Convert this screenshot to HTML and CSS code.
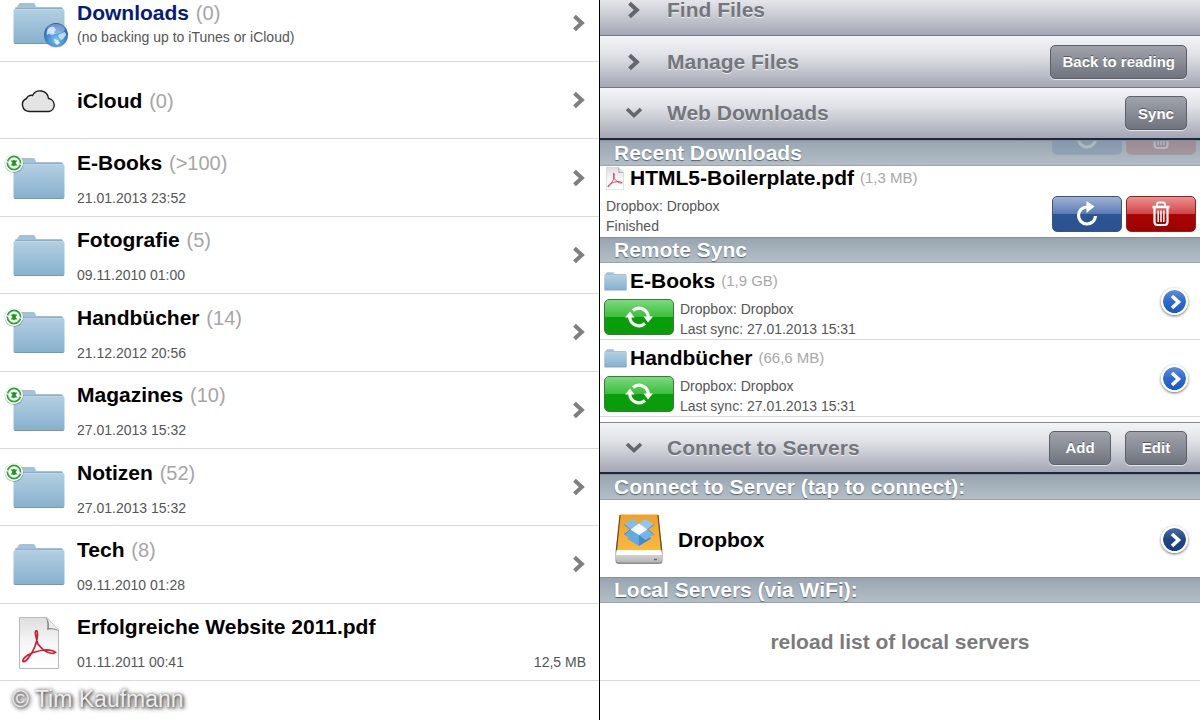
FILE: index.html
```html
<!DOCTYPE html>
<html lang="en">
<head>
    <meta charset="UTF-8">
    <meta name="viewport" content="width=device-width, initial-scale=1.0">
    <title>Files</title>
    <link rel="stylesheet" href="styles.css">
</head>
<body>

<!-- shared icons -->
<svg class="sprite" aria-hidden="true">
    <defs>
        <linearGradient id="folderFront" x1="0" y1="0" x2="0" y2="1">
            <stop offset="0" stop-color="#b3cfe2"/>
            <stop offset="1" stop-color="#86b0cd"/>
        </linearGradient>
        <linearGradient id="paper" x1="0" y1="0" x2="0" y2="1">
            <stop offset="0" stop-color="#dedede"/>
            <stop offset="0.5" stop-color="#f6f6f6"/>
            <stop offset="1" stop-color="#ffffff"/>
        </linearGradient>
        <radialGradient id="globeFill" cx="0.5" cy="0.7" r="0.65">
            <stop offset="0" stop-color="#7cc4f4"/>
            <stop offset="0.6" stop-color="#3f87cf"/>
            <stop offset="1" stop-color="#2a5ea8"/>
        </radialGradient>
        <linearGradient id="driveTop" x1="0" y1="0" x2="0" y2="1">
            <stop offset="0" stop-color="#f0a02a"/>
            <stop offset="1" stop-color="#fcb83e"/>
        </linearGradient>
        <linearGradient id="driveFront" x1="0" y1="0" x2="0" y2="1">
            <stop offset="0" stop-color="#e6e6e6"/>
            <stop offset="1" stop-color="#b5b5b5"/>
        </linearGradient>
    </defs>
    <symbol id="folder" viewBox="0 0 52 42">
        <path d="M2 9V5Q2 4 4 4L5 2Q6 0 8 0H20Q22 0 22.500 2L23 4H48Q50 4 50 6V12H2Z" fill="#a3c2d7"/>
        <path d="M2 6.500L3 5H49L50 6.500Z" fill="#8cb0c8"/>
        <rect x="0.500" y="6" width="51" height="35" rx="2" fill="url(#folderFront)"/>
        <path d="M1.500 6.500H50.500" stroke="#bdd5e5" stroke-width="1"/>
        <path d="M1.500 40.500H50.500" stroke="#6f9aba" stroke-width="1"/>
    </symbol>
    <symbol id="globe" viewBox="0 0 26 26">
        <circle cx="13" cy="13.800" r="12" fill="#00000030"/>
        <circle cx="13" cy="13" r="12" fill="url(#globeFill)"/>
        <path d="M5 7Q8 4 11 5L13 8L11 10L12 12L9 13L6 12L4 13L3.500 10Z" fill="#d9edfb" opacity="0.800"/>
        <path d="M15 13L19 11L22 10L23 13L20 17L18 18L16 16Z" fill="#d9edfb" opacity="0.800"/>
        <path d="M11 17L15 18L17 21L14 23L12 21Z" fill="#e8f6ff" opacity="0.900"/>
        <ellipse cx="13" cy="7" rx="9" ry="5" fill="#ffffff55"/>
    </symbol>
    <symbol id="cloud" viewBox="0 0 36 24">
        <path d="M8 22.500A6.800 6.800 0 0 1 5.500 9.500A5 5 0 0 1 11.500 6.500A8.500 8.500 0 0 1 27.500 9.500A6.600 6.600 0 0 1 28 22.500Z" fill="#e4e4e4" stroke="#1c1c1c" stroke-width="1.400"/>
    </symbol>
    <symbol id="syncbadge" viewBox="0 0 20 20">
        <circle cx="10" cy="10.500" r="9.500" fill="#00000040"/>
        <circle cx="10" cy="10" r="9" fill="#fff"/>
        <circle cx="10" cy="10" r="6.600" fill="none" stroke="#27a52a" stroke-width="1.700"/>
        <path d="M6.500 7.500H9L10 6.500L11 7.500H13.500L11.500 10L13.500 12.500H11L10 13.500L9 12.500H6.500L8.500 10Z" fill="#1c961f"/>
        <path d="M2.500 8.500L5 9.500M15 10.500L17.500 11.500" stroke="#fff" stroke-width="1.200"/>
    </symbol>
    <symbol id="pdf" viewBox="0 0 40 52">
        <path d="M0.500 0.500H28L39.500 13V51.500H0.500Z" fill="url(#paper)" stroke="#b9b9b9"/>
        <path d="M27 0.500L39.500 14Q34 11 28 13Q29 6 27 0.500Z" fill="#8f8f8f"/>
        <path d="M28 1L39 12.500Q34 10.500 30 11Q30.500 5 28 1Z" fill="#ededed"/>
        <path d="M17 14Q15.500 15 17 19Q18 25 19 27Q25 35 31 36Q35 37 36.500 35.500Q33 32.500 25 33Q15 34.500 9 38Q3 42 4 44.500Q7 45 10 40Q18 29 18.500 18Q18.500 13 17 14Z" fill="none" stroke="#c62236" stroke-width="1.700"/>
    </symbol>
    <symbol id="chevron" viewBox="0 0 12 16">
        <path d="M2 2L8.500 8L2 14" fill="none" stroke="currentColor" stroke-width="3.600"/>
    </symbol>
    <symbol id="chevdown" viewBox="0 0 18 12">
        <path d="M2 2L9 8.500L16 2" fill="none" stroke="currentColor" stroke-width="3.600"/>
    </symbol>
    <symbol id="reload" viewBox="0 0 24 26">
        <path d="M12 6A8.500 8.500 0 1 0 20.500 15" fill="none" stroke="#fff" stroke-width="3.200"/>
        <path d="M11.500 0L19.500 5.500L11.500 12Z" fill="#fff"/>
    </symbol>
    <symbol id="trash" viewBox="0 0 20 26">
        <path d="M6 5V3Q6 1.500 8 1.500H12Q14 1.500 14 3V5" fill="none" stroke="#fff" stroke-width="2"/>
        <path d="M1.500 6H18.500" stroke="#fff" stroke-width="2.600"/>
        <path d="M3.500 7V21Q3.500 24 6.500 24H13.500Q16.500 24 16.500 21V7" fill="none" stroke="#fff" stroke-width="2.200"/>
        <path d="M7.200 9.500V21M10 9.500V21M12.800 9.500V21" stroke="#fff" stroke-width="1.500"/>
    </symbol>
    <symbol id="sync" viewBox="0 0 28 24">
        <path d="M8 5.500A9.300 9.300 0 0 1 23.300 12M20 18.500A9.300 9.300 0 0 1 4.700 12" fill="none" stroke="#fff" stroke-width="3.200"/>
        <path d="M18.500 11.500H28L23 17.500ZM0 12.500H9.500L5 6.500Z" fill="#fff"/>
    </symbol>
    <symbol id="drive" viewBox="0 0 48 51">
        <path d="M5 1H43L47.500 37V47Q47.500 50 44 50H4Q0.500 50 0.500 47V37Z" fill="#8d8d8d"/>
        <path d="M5 0.500H43L46 36H2Z" fill="url(#driveTop)"/>
        <path d="M5 1L1.500 36M43 1L46.500 36" stroke="#6b4b1a" stroke-width="1.200"/>
        <path d="M2 36H46L47 40V45Q47 48.500 44 48.500H4Q1 48.500 1 45V40Z" fill="url(#driveFront)"/>
        <path d="M2 36H46L47 41H1Z" fill="#fff"/>
        <path d="M39 45.500H42" stroke="#666" stroke-width="1.400"/>
        <path d="M17.500 5L24 9.500L15.500 15.500L9 10.500Z" fill="#7fbdf0"/>
        <path d="M30.500 5L39 10.500L32.500 15.500L24 9.500Z" fill="#8cc6f4"/>
        <path d="M15.500 15.500L24 21L17.500 26L9 20.500Z" fill="#5faaea"/>
        <path d="M32.500 15.500L39 20.500L30.500 26L24 21Z" fill="#6db6ef"/>
        <path d="M24 9.500L32.500 15.500L24 21L15.500 15.500Z" fill="#f4faff"/>
        <path d="M12.500 23V25L24 32V21L17.500 26Z" fill="#5ba9ea"/>
        <path d="M35.500 23V25L24 32V21L30.500 26Z" fill="#3c8bd6"/>
        <path d="M9 10.500L15.500 15.500L9 20.500M39 10.500L32.500 15.500L39 20.500" fill="none" stroke="#3a88cf" stroke-width="0.800"/>
    </symbol>
</svg>

<div class="app">
    <main class="files">
        <a class="file tight" href="#">
            <span class="icon"><svg class="folder"><use href="#folder"/></svg><svg class="globe"><use href="#globe"/></svg></span>
            <span class="info">
                <span class="name special">Downloads <span class="count">(0)</span></span>
                <span class="meta">(no backing up to iTunes or iCloud)</span>
            </span>
            <svg class="chevron"><use href="#chevron"/></svg>
        </a>
        <a class="file tight" href="#">
            <span class="icon"><svg class="cloud"><use href="#cloud"/></svg></span>
            <span class="info"><span class="name">iCloud <span class="count">(0)</span></span></span>
            <svg class="chevron"><use href="#chevron"/></svg>
        </a>
        <a class="file" href="#">
            <span class="icon"><svg class="folder"><use href="#folder"/></svg><svg class="badge"><use href="#syncbadge"/></svg></span>
            <span class="info">
                <span class="name">E-Books <span class="count">(&gt;100)</span></span>
                <span class="meta">21.01.2013 23:52</span>
            </span>
            <svg class="chevron"><use href="#chevron"/></svg>
        </a>
        <a class="file" href="#">
            <span class="icon"><svg class="folder"><use href="#folder"/></svg></span>
            <span class="info">
                <span class="name">Fotografie <span class="count">(5)</span></span>
                <span class="meta">09.11.2010 01:00</span>
            </span>
            <svg class="chevron"><use href="#chevron"/></svg>
        </a>
        <a class="file" href="#">
            <span class="icon"><svg class="folder"><use href="#folder"/></svg><svg class="badge"><use href="#syncbadge"/></svg></span>
            <span class="info">
                <span class="name">Handbücher <span class="count">(14)</span></span>
                <span class="meta">21.12.2012 20:56</span>
            </span>
            <svg class="chevron"><use href="#chevron"/></svg>
        </a>
        <a class="file" href="#">
            <span class="icon"><svg class="folder"><use href="#folder"/></svg><svg class="badge"><use href="#syncbadge"/></svg></span>
            <span class="info">
                <span class="name">Magazines <span class="count">(10)</span></span>
                <span class="meta">27.01.2013 15:32</span>
            </span>
            <svg class="chevron"><use href="#chevron"/></svg>
        </a>
        <a class="file" href="#">
            <span class="icon"><svg class="folder"><use href="#folder"/></svg><svg class="badge"><use href="#syncbadge"/></svg></span>
            <span class="info">
                <span class="name">Notizen <span class="count">(52)</span></span>
                <span class="meta">27.01.2013 15:32</span>
            </span>
            <svg class="chevron"><use href="#chevron"/></svg>
        </a>
        <a class="file" href="#">
            <span class="icon"><svg class="folder"><use href="#folder"/></svg></span>
            <span class="info">
                <span class="name">Tech <span class="count">(8)</span></span>
                <span class="meta">09.11.2010 01:28</span>
            </span>
            <svg class="chevron"><use href="#chevron"/></svg>
        </a>
        <a class="file" href="#">
            <span class="icon"><svg class="pdf"><use href="#pdf"/></svg></span>
            <span class="info">
                <span class="name">Erfolgreiche Website 2011.pdf</span>
                <span class="meta split"><span>01.11.2011 00:41</span><span>12,5 MB</span></span>
            </span>
        </a>
        <footer class="credit">© Tim Kaufmann</footer>
    </main>

    <aside class="panel">
        <div class="bar">
            <button class="toggle"><span class="arrow"><svg class="chevron"><use href="#chevron"/></svg></span>Find Files</button>
        </div>
        <div class="bar">
            <button class="toggle"><span class="arrow"><svg class="chevron"><use href="#chevron"/></svg></span>Manage Files</button>
            <button class="btn">Back to reading</button>
        </div>
        <div class="bar open">
            <button class="toggle"><span class="arrow"><svg class="chevdown"><use href="#chevdown"/></svg></span>Web Downloads</button>
            <button class="btn">Sync</button>
        </div>

        <h3 class="section">Recent Downloads
            <!-- scrolled row shining through the header -->
            <span class="under" aria-hidden="true">
                <span class="action blue"><svg class="reload"><use href="#reload"/></svg></span>
                <span class="action red"><svg class="trash"><use href="#trash"/></svg></span>
            </span>
        </h3>
        <div class="download">
            <div class="title"><svg class="pdf-small"><use href="#pdf"/></svg>HTML5-Boilerplate.pdf <span class="size">(1,3 MB)</span></div>
            <div class="details">
                <p class="lines">Dropbox: Dropbox<br>Finished</p>
                <button class="action blue" aria-label="Reload"><svg class="reload"><use href="#reload"/></svg></button>
                <button class="action red" aria-label="Delete"><svg class="trash"><use href="#trash"/></svg></button>
            </div>
        </div>

        <h3 class="section">Remote Sync</h3>
        <div class="remote">
            <div class="title"><svg class="folder-small"><use href="#folder"/></svg>E-Books <span class="size">(1,9 GB)</span></div>
            <div class="details">
                <button class="action green" aria-label="Sync E-Books"><svg class="sync"><use href="#sync"/></svg></button>
                <p class="lines">Dropbox: Dropbox<br>Last sync: 27.01.2013 15:31</p>
            </div>
            <button class="more" aria-label="Details"><svg class="chevron"><use href="#chevron"/></svg></button>
        </div>
        <div class="remote">
            <div class="title"><svg class="folder-small"><use href="#folder"/></svg>Handbücher <span class="size">(66,6 MB)</span></div>
            <div class="details">
                <button class="action green" aria-label="Sync Handbücher"><svg class="sync"><use href="#sync"/></svg></button>
                <p class="lines">Dropbox: Dropbox<br>Last sync: 27.01.2013 15:31</p>
            </div>
            <button class="more" aria-label="Details"><svg class="chevron"><use href="#chevron"/></svg></button>
        </div>

        <div class="bar open servers">
            <button class="toggle"><span class="arrow"><svg class="chevdown"><use href="#chevdown"/></svg></span>Connect to Servers</button>
            <button class="btn">Add</button>
            <button class="btn">Edit</button>
        </div>
        <h3 class="section">Connect to Server (tap to connect):</h3>
        <div class="server">
            <svg class="drive"><use href="#drive"/></svg>
            <a class="name" href="#">Dropbox</a>
            <button class="more dark" aria-label="Details"><svg class="chevron"><use href="#chevron"/></svg></button>
        </div>
        <h3 class="section">Local Servers (via WiFi):</h3>
        <button class="reload-list">reload list of local servers</button>
    </aside>
</div>

</body>
</html>
```
FILE: styles.css
```css
* {
    box-sizing: border-box;
}
body {
    margin: 0;
    overflow: hidden;
    background: #fff;
    color: #000;
    font-family: "Liberation Sans", Arial, sans-serif;
    font-size: 14px;
}
a {
    color: inherit;
    text-decoration: none;
}
button {
    font-family: inherit;
    cursor: pointer;
}
svg {
    display: block;
    flex: none;
}
.sprite {
    position: absolute;
    width: 0;
    height: 0;
}
/* both columns are scrolled down a little */
.app {
    display: grid;
    grid-template-columns: 1fr 1fr;
    min-height: calc(100vh + 16px);
    margin-top: -16px;
}

/* file list */
.files {
    display: grid;
    grid-template-rows: 78px repeat(8, 1fr) 39px;
    border-right: 1px solid #000;
}
.file {
    display: flex;
    align-items: center;
    min-height: 77px;
    padding-right: 13px;
    border-bottom: 1px solid #d9d9d9;
}
.icon {
    position: relative;
    display: flex;
    justify-content: center;
    width: 77px;
    padding-top: 2px;
    flex: none;
}
.info {
    display: flex;
    flex-direction: column;
    flex: 1;
    gap: 13px;
    padding-top: 4px;
}
.tight .info {
    gap: 2px;
    padding-top: 2px;
}
.name {
    font-size: 21px;
    font-weight: bold;
    line-height: 24px;
}
.special {
    color: #041c7c;
}
.count {
    margin-left: 1px;
    color: #a6a6a6;
    font-size: 20px;
    font-weight: normal;
}
.meta {
    color: #555;
    line-height: 20px;
}
.split {
    display: flex;
    justify-content: space-between;
}
.folder {
    width: 52px;
    height: 42px;
}
.cloud {
    width: 36px;
    height: 24px;
}
.pdf {
    width: 40px;
    height: 52px;
}
.globe {
    position: absolute;
    left: 43px;
    top: 21px;
    width: 26px;
    height: 26px;
}
.badge {
    position: absolute;
    left: 4px;
    top: -3px;
    width: 20px;
    height: 20px;
}
.chevron {
    width: 14px;
    height: 18px;
    color: #7f7f7f;
}
.chevdown {
    width: 18px;
    height: 12px;
}
.credit {
    padding-left: 12px;
    color: #ececec;
    font-size: 23px;
    line-height: 36px;
    text-shadow: 1px 1px 3px #555, 0 0 4px #777, 2px 2px 5px #888;
}

/* right panel */
.bar {
    display: flex;
    align-items: center;
    gap: 14px;
    height: 52px;
    padding-right: 13px;
    background: linear-gradient(#f3f4f7, #e2e3e8 35%, #c6c8d0 65%, #a3a6b4);
    border-bottom: 1px solid #747885;
}
.bar.open {
    border-bottom: 2px solid #20293a;
}
.bar.servers {
    margin-top: 5px;
    border-top: 1px solid #888;
}
.toggle {
    display: flex;
    align-items: center;
    flex: 1;
    align-self: stretch;
    padding: 0;
    border: none;
    background: none;
    color: #73767d;
    font-size: 21px;
    font-weight: bold;
    text-align: left;
    text-shadow: 0 1px 0 #eee;
}
.arrow {
    display: flex;
    justify-content: center;
    width: 67px;
    color: #63666d;
}
.arrow .chevron {
    color: #63666d;
}
.btn {
    min-width: 62px;
    height: 34px;
    padding: 0 11px;
    border: 1px solid #5b606a;
    border-radius: 5px;
    background: linear-gradient(#a0a3aa, #888c94 50%, #6e737d);
    box-shadow: 0 1px 0 #e6e6ea;
    color: #fff;
    font-size: 15px;
    font-weight: bold;
    text-shadow: 0 -1px 0 #555a63;
}
.section {
    position: relative;
    height: 26px;
    margin: 0;
    padding-left: 14px;
    overflow: hidden;
    background: linear-gradient(#98a5b0, #b3bec7);
    border-top: 1px solid #84929d;
    border-bottom: 1px solid #98a4ae;
    color: #fff;
    font-size: 21px;
    line-height: 24px;
    text-shadow: 0 1px 1px #56626d;
}
.under {
    position: absolute;
    right: 4px;
    bottom: 10px;
    display: flex;
    gap: 4px;
    opacity: 0.16;
}
.title {
    display: flex;
    align-items: center;
    font-size: 21px;
    font-weight: bold;
    line-height: 24px;
}
.size {
    margin-left: 6px;
    color: #a8a8a8;
    font-size: 15px;
    font-weight: normal;
}
.details {
    display: flex;
    align-items: flex-start;
    gap: 4px;
    margin-top: 6px;
}
.lines {
    flex: 1;
    margin: 0;
    color: #555;
    line-height: 20px;
}
.download {
    padding: 0 4px 1px 6px;
}
.remote {
    position: relative;
    padding: 6px 4px 0;
    border-bottom: 1px solid #d9d9d9;
}
.pdf-small {
    width: 18px;
    height: 23px;
    margin-right: 6px;
}
.folder-small {
    width: 23px;
    height: 19px;
    margin-right: 3px;
}
.action {
    display: flex;
    align-items: center;
    justify-content: center;
    width: 70px;
    height: 36px;
    padding: 0;
    border: 1px solid #555;
    border-radius: 5px;
}
.remote .lines {
    padding-left: 2px;
}
.blue {
    background: linear-gradient(#9fb2d6, #5a7bb3 50%, #2d5595 51%, #2a5290);
    border-color: #3c5580;
}
.red {
    background: linear-gradient(#ee9090, #cf4545 50%, #a80606 51%, #a00000);
    border-color: #8a2626;
}
.green {
    background: linear-gradient(#7bdb7b, #3cbd3c 50%, #0a9e0a 51%, #0a9c0a);
    border-color: #3c7a3c;
}
.reload {
    width: 24px;
    height: 26px;
}
.trash {
    width: 20px;
    height: 26px;
}
.sync {
    width: 28px;
    height: 24px;
}
.more {
    display: flex;
    align-items: center;
    justify-content: center;
    width: 27px;
    height: 27px;
    padding: 0 0 0 2px;
    border: 2px solid #fff;
    border-radius: 50%;
    background: linear-gradient(#5d8fe0, #2c69cf 50%, #1c58c4);
    background-clip: padding-box;
    box-shadow: 0 1px 3px #666;
}
.more .chevron {
    width: 12px;
    height: 16px;
    color: #fff;
}
.more.dark {
    background: linear-gradient(#4a6ea8, #1f4585 50%, #17407f);
    background-clip: padding-box;
}
.remote .more {
    position: absolute;
    right: 12px;
    top: 25px;
}
.server {
    display: flex;
    align-items: center;
    gap: 15px;
    height: 77px;
    padding: 2px 12px 0 15px;
}
.server .name {
    flex: 1;
}
.drive {
    width: 48px;
    height: 51px;
}
.reload-list {
    display: block;
    width: 100%;
    height: 78px;
    padding: 0;
    border: none;
    border-bottom: 1px solid #d9d9d9;
    background: none;
    color: #7b7b7b;
    font-size: 21px;
    font-weight: bold;
}
```
